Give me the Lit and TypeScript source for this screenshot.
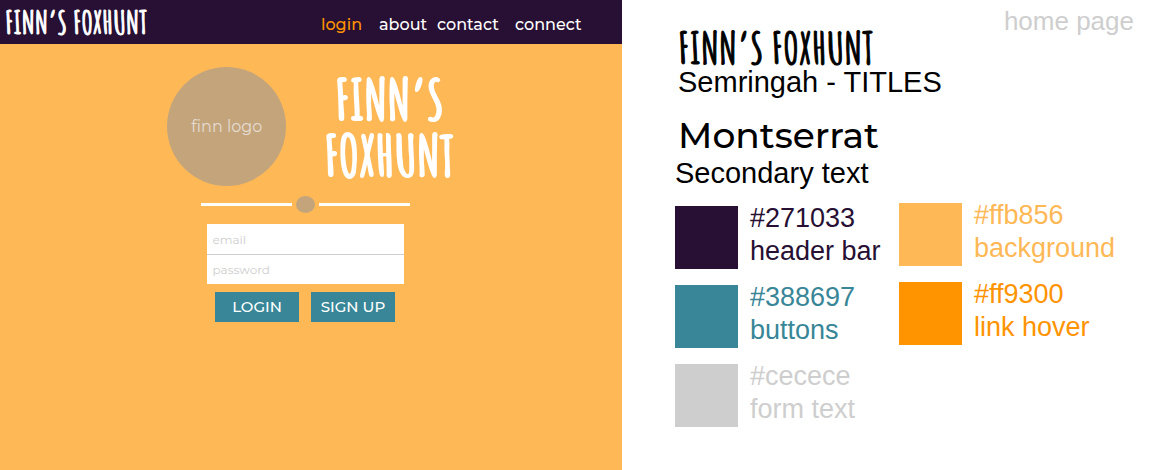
import { LitElement, html, css } from "lit";
import { customElement } from "lit/decorators.js";
import { classMap } from "lit/directives/class-map.js";
import { styleMap } from "lit/directives/style-map.js";

interface Swatch {
  hex: string;
  use: string;
}

const NAV = ["login", "about", "contact", "connect"];

const COLUMNS: Swatch[][] = [
  [
    { hex: "#271033", use: "header bar" },
    { hex: "#388697", use: "buttons" },
    { hex: "#cecece", use: "form text" },
  ],
  [
    { hex: "#ffb856", use: "background" },
    { hex: "#ff9300", use: "link hover" },
  ],
];

@customElement("login-page")
class LoginPage extends LitElement {
  static styles = css`
    :host {
      display: block;
      background: #ffb856;
      font-family: Montserrat, Inter, sans-serif;
    }
    .bar {
      display: flex;
      align-items: center;
      justify-content: space-between;
      height: 44px;
      padding: 0 43px 0 5px;
      background: #271033;
      color: #fff;
    }
    .brand,
    .title {
      font-family: Semringah, "Amatic SC", "DejaVu Sans Condensed", sans-serif;
      font-weight: 700;
      color: #fff;
    }
    .brand {
      font-size: 32px;
      line-height: 44px;
      text-decoration: none;
      white-space: nowrap;
      -webkit-text-stroke: 1px currentColor;
    }
    .nav {
      display: grid;
      grid-template-columns: 58px 58px 78px 64px;
      padding-top: 6px;
    }
    .link {
      color: #fff;
      font-size: 16px;
      line-height: 20px;
      font-weight: 500;
      text-decoration: none;
    }
    .link.current,
    .link:hover {
      color: #ff9300;
    }
    .hero {
      display: flex;
      justify-content: center;
      align-items: center;
      gap: 38px;
      padding-top: 23px;
    }
    .logo {
      display: grid;
      place-items: center;
      width: 119px;
      height: 119px;
      border-radius: 50%;
      background: #c4a57b;
      color: #e4dcd3;
      font-size: 16px;
    }
    .title {
      margin: 0;
      font-size: 56px;
      line-height: 56px;
      text-align: center;
      -webkit-text-stroke: 2px currentColor;
    }
    .title span {
      display: block;
    }
    .lower {
      display: flex;
      flex-direction: column;
      align-items: center;
      padding: 10px 12px 0 0;
    }
    .divider {
      display: flex;
      align-items: center;
      gap: 4px;
    }
    .line {
      width: 91px;
      height: 3px;
      background: #fff;
    }
    .dot {
      width: 19px;
      height: 17px;
      border-radius: 50%;
      background: #c4a57b;
    }
    .form {
      display: flex;
      flex-direction: column;
      align-items: center;
      margin-top: 11px;
    }
    .fields {
      display: flex;
      flex-direction: column;
      width: 197px;
      background: #fff;
    }
    .field {
      box-sizing: border-box;
      height: 30px;
      padding: 0 6px;
      border: 0;
      border-radius: 0;
      background: none;
      font: 400 12px Montserrat, Inter, sans-serif;
      color: #271033;
    }
    .field + .field {
      border-top: 1px solid #cecece;
    }
    .field::placeholder {
      color: #cecece;
      opacity: 1;
    }
    .actions {
      display: flex;
      gap: 12px;
      margin-top: 8px;
    }
    .button {
      width: 84px;
      height: 30px;
      padding: 0 0 2px;
      border: 0;
      background: #388697;
      color: #fff;
      font: 500 15px Montserrat, Inter, sans-serif;
    }
  `;

  render() {
    return html`
      <header class="bar">
        <a class="brand" href="#home">FINN’S FOXHUNT</a>
        <nav class="nav">
          ${NAV.map(
            (name) =>
              html`<a class=${classMap({ link: true, current: name === "login" })} href="#${name}">${name}</a>`,
          )}
        </nav>
      </header>
      <div class="hero">
        <div class="logo">finn logo</div>
        <h1 class="title"><span>FINN’S</span><span>FOXHUNT</span></h1>
      </div>
      <div class="lower">
        <div class="divider">
          <span class="line"></span><span class="dot"></span><span class="line"></span>
        </div>
        <form class="form">
          <div class="fields">
            <input class="field" type="email" aria-label="email" placeholder="email" />
            <input class="field" type="password" aria-label="password" placeholder="password" />
          </div>
          <div class="actions">
            <button class="button" type="button">LOGIN</button>
            <button class="button" type="button">SIGN UP</button>
          </div>
        </form>
      </div>
    `;
  }
}

@customElement("style-notes")
class StyleNotes extends LitElement {
  static styles = css`
    :host {
      display: block;
      background: #fff;
      color: #000;
      font-family: Helvetica, "Liberation Sans", Arial, sans-serif;
      padding: 5px 18px 0 53px;
    }
    .page {
      margin: 0;
      text-align: right;
      font-size: 26px;
      line-height: 32px;
      color: #cecece;
    }
    .sample {
      margin: 0;
      padding-left: 3px;
      font-weight: 400;
    }
    .display {
      font: 700 44px/30px Semringah, "Amatic SC", "DejaVu Sans Condensed", sans-serif;
      margin: -5px 0 3px;
      -webkit-text-stroke: 1px currentColor;
    }
    .body {
      font: 500 36px/42px Montserrat, Inter, sans-serif;
      margin-top: 15px;
    }
    .note {
      margin: 0;
      font-size: 29px;
      line-height: 34px;
    }
    .inset {
      padding-left: 3px;
    }
    .palette {
      display: flex;
      gap: 16px;
      margin-top: 9px;
    }
    .column {
      display: flex;
      flex-direction: column;
      gap: 12px;
      width: 208px;
    }
    .column:first-child {
      padding-top: 3px;
    }
    .swatch {
      display: flex;
      gap: 12px;
      font-size: 27px;
      line-height: 33px;
      white-space: nowrap;
    }
    .chip {
      width: 63px;
      height: 63px;
      margin-top: 4px;
      flex: none;
    }
    .text span {
      display: block;
    }
  `;

  render() {
    return html`
      <p class="page">home page</p>
      <h2 class="sample display">FINN’S FOXHUNT</h2>
      <p class="note inset">Semringah - TITLES</p>
      <h2 class="sample body">Montserrat</h2>
      <p class="note">Secondary text</p>
      <div class="palette">
        ${COLUMNS.map(
          (column) => html`<div class="column">
            ${column.map(
              (s) => html`<div class="swatch" style=${styleMap({ color: s.hex })}>
                <div class="chip" style=${styleMap({ background: s.hex })}></div>
                <div class="text"><span>${s.hex}</span><span>${s.use}</span></div>
              </div>`,
            )}
          </div>`,
        )}
      </div>
    `;
  }
}

@customElement("app-root")
class AppRoot extends LitElement {
  static styles = css`
    :host {
      display: grid;
      grid-template-columns: minmax(0, 622fr) minmax(0, 530fr);
      min-height: 100vh;
    }
  `;

  render() {
    return html`<login-page></login-page><style-notes></style-notes>`;
  }
}
